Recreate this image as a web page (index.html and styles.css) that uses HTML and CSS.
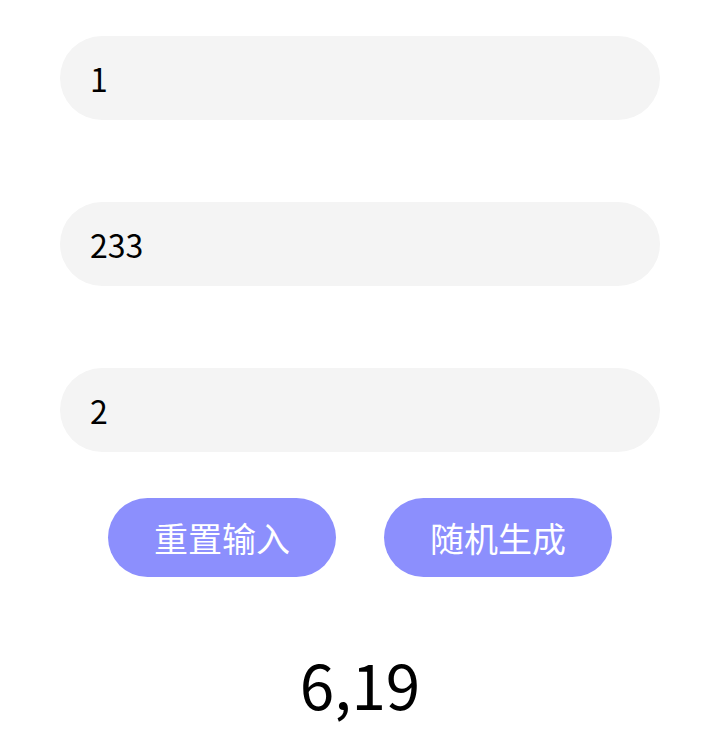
FILE: index.html
```html
<!DOCTYPE html>
<html lang="zh">
<head>
<meta charset="utf-8">
<link rel="stylesheet" href="styles.css">
</head>
<body>
<div class="page">
  <div class="field">1</div>
  <div class="field">233</div>
  <div class="field">2</div>
  <div class="actions">
    <button class="btn">重置输入</button>
    <button class="btn">随机生成</button>
  </div>
  <div class="result">6,19</div>
</div>
</body>
</html>
```
FILE: styles.css
```css
html, body {
  margin: 0;
  padding: 0;
  background: #ffffff;
}
body {
  font-family: "Noto Sans CJK SC", "Noto Sans", sans-serif;
  color: #000;
}
.page {
  width: 600px;
  margin: 0 auto;
  padding-top: 36px;
  display: flex;
  flex-direction: column;
  align-items: center;
}
.field {
  box-sizing: border-box;
  width: 600px;
  height: 84px;
  border-radius: 42px;
  background: #f4f4f4;
  padding-left: 30px;
  display: flex;
  align-items: center;
  font-size: 32px;
  margin-bottom: 82px;
}
.field:nth-of-type(3) {
  margin-bottom: 46px;
}
.actions {
  display: flex;
  gap: 48px;
  justify-content: center;
}
.btn {
  width: 228px;
  height: 79px;
  border: none;
  border-radius: 40px;
  background: #8c8ffd;
  color: #ffffff;
  font-family: "Noto Sans CJK SC", sans-serif;
  font-size: 34px;
  padding: 0;
}
.result {
  margin-top: 66px;
  font-size: 62px;
  line-height: 80px;
}
```
